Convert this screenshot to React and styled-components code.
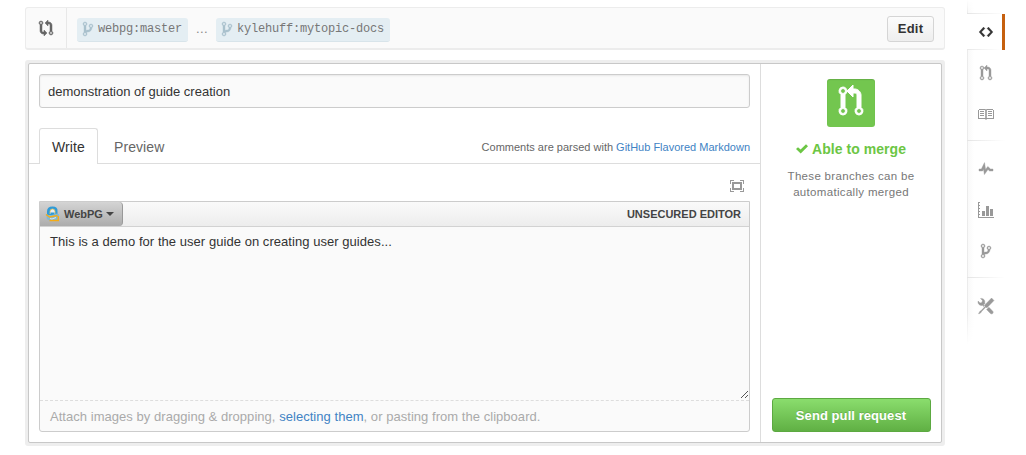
import React from 'react';
import styled, { createGlobalStyle, css } from 'styled-components';

const Global = createGlobalStyle`
  * { box-sizing: border-box; }
  body { margin: 0; background: #fff; color: #333; font: 13px/18px "Liberation Sans", Arial, sans-serif; }
`;

const paths = {
  pull: 'M11 11.28V5c-.03-.78-.34-1.47-.94-2.06C9.46 2.35 8.78 2.03 8 2H7V0L4 3l3 3V4h1c.27.02.48.11.69.31.21.2.3.42.31.69v6.28A1.993 1.993 0 0 0 10 15a1.993 1.993 0 0 0 1-3.72zm-1 2.92c-.66 0-1.2-.55-1.2-1.2 0-.65.55-1.2 1.2-1.2.65 0 1.2.55 1.2 1.2 0 .65-.55 1.2-1.2 1.2zM4 3c0-1.11-.89-2-2-2a1.993 1.993 0 0 0-1 3.72v6.56A1.993 1.993 0 0 0 2 15a1.993 1.993 0 0 0 1-3.72V4.72c.59-.34 1-.98 1-1.72zm-.8 10c0 .66-.55 1.2-1.2 1.2-.65 0-1.2-.55-1.2-1.2 0-.65.55-1.2 1.2-1.2.65 0 1.2.55 1.2 1.2zM2 4.2C1.34 4.2.8 3.65.8 3c0-.65.55-1.2 1.2-1.2.65 0 1.2.55 1.2 1.2 0 .65-.55 1.2-1.2 1.2z',
  compare: 'M5 12H4c-.27-.02-.48-.11-.69-.31-.21-.2-.3-.42-.31-.69V4.72A1.993 1.993 0 0 0 2 1a1.993 1.993 0 0 0-1 3.72V11c.03.78.34 1.47.94 2.06.6.59 1.28.91 2.06.94h1v2l3-3-3-3v2zM2 1.8c.66 0 1.2.55 1.2 1.2 0 .65-.55 1.2-1.2 1.2C1.35 4.2.8 3.65.8 3c0-.65.55-1.2 1.2-1.2zm11 9.48V5c-.03-.78-.34-1.47-.94-2.06-.6-.59-1.28-.91-2.06-.94H9V0L6 3l3 3V4h1c.27.02.48.11.69.31.21.2.3.42.31.69v6.28A1.993 1.993 0 0 0 12 15a1.993 1.993 0 0 0 1-3.72zm-1 2.92c-.66 0-1.2-.55-1.2-1.2 0-.65.55-1.2 1.2-1.2.65 0 1.2.55 1.2 1.2 0 .65-.55 1.2-1.2 1.2z',
  branch: 'M10 5c0-1.11-.89-2-2-2a1.993 1.993 0 0 0-1 3.72v.3c-.02.52-.23.98-.63 1.38-.4.4-.86.61-1.38.63-.83.02-1.48.16-2 .45V4.72a1.993 1.993 0 0 0-1-3.72C.88 1 0 1.89 0 3a2 2 0 0 0 1 1.72v6.56c-.59.35-1 .99-1 1.72 0 1.11.89 2 2 2 1.11 0 2-.89 2-2 0-.53-.2-1-.53-1.36.09-.06.48-.41.59-.47.25-.11.56-.17.94-.17 1.05-.05 1.95-.45 2.75-1.25S8.95 7.77 9 6.73h-.02C9.59 6.37 10 5.73 10 5zM2 1.8a1.2 1.2 0 0 1 0 2.4 1.2 1.2 0 0 1 0-2.4zm0 12.4a1.2 1.2 0 0 1 0-2.4 1.2 1.2 0 0 1 0 2.4zm6-8a1.2 1.2 0 0 1 0-2.4 1.2 1.2 0 0 1 0 2.4z',
  code: 'M9.5 3L8 4.5 11.5 8 8 11.5 9.5 13 14 8 9.5 3zm-5 0L0 8l4.5 5L6 11.5 2.5 8 6 4.5 4.5 3z',
  book: 'M1 3h6l1 .5L9 3h6v1h1v9H9l-1 1-1-1H0V4h1zm0 1v8h6.2V4.5L7 4zm8 0l-.2.5V12H15V4zM2 5h4v1H2zm0 2h4v1H2zm0 2h4v1H2zm8-4h4v1h-4zm0 2h4v1h-4zm0 2h4v1h-4z',
  pulse: 'M11.5 8L8.8 5.4 6.6 8.5 5.5 1.6 2.38 8H0v2h3.6l.9-1.8.9 5.4L9 8.5l1.6 1.5H14V8z',
  graph: 'M0 0h2v1H1v2h1v1H1v2h1v1H1v2h1v1H1v2h1v1H1v2h15v1H0zM4 9h3v5H4zm4-5h3v10H8zm4 3h3v7h-3z',
  tools: 'M4.48 7.27c.26.26 1.28 1.33 1.28 1.33l.56-.58-.88-.91 1.69-1.8s-.76-.74-.43-.45c.32-1.19.03-2.51-.87-3.44C4.93.5 3.66.2 2.52.51l1.93 2-.51 1.96-1.89.52-1.93-1.99C-.19 4.17.1 5.48 1 6.4c.94.98 2.29 1.26 3.48.87zm6.44 1.94l-2.33 2.3 3.84 3.98c.31.33.73.49 1.14.49.41 0 .82-.16 1.14-.49.63-.65.63-1.7 0-2.35l-3.79-3.93zM16 2.53L13.55 0 6.33 7.46l.88.91-4.31 4.46-.99.53-1.39 2.27.35.37 2.2-1.44.51-1.02L7.9 9.08l.88.91L16 2.53z',
  screen: 'M0 0h4v1H1v3H0zm10 0h4v4h-1V1h-3zM0 8h1v3h3v1H0zm13 0h1v4h-4v-1h3zM2 2h10v8H2zm2 2v4h6V4z',
  check: 'M12 2.2L4.7 9.5 0 5.1 2 3.2l2.6 2.4L10 .2z',
};

const Icon = ({ name, w, h, box, weight = 0 }) => (
  <svg
    width={w}
    height={h}
    viewBox={box || `0 0 ${w} ${h}`}
    fill="currentColor"
    fillRule="evenodd"
    stroke="currentColor"
    strokeWidth={weight}
    overflow="visible"
    aria-hidden="true"
  >
    <path d={paths[name]} />
  </svg>
);

const Page = styled.div`
  display: flex;
  width: 1026px;
  height: 455px;
  overflow: hidden;
`;
const Main = styled.main`
  width: 920px;
  margin: 7px 22px 0 25px;
`;
const CompareBar = styled.header`
  display: flex;
  align-items: center;
  height: 43px;
  padding-right: 10px;
  background: #fafafa;
  border: 1px solid #ececec;
  border-bottom-width: 2px;
  border-radius: 3px;
`;
const CompareIcon = styled.div`
  display: flex;
  align-items: center;
  align-self: stretch;
  width: 41px;
  padding: 0 0 1px 12px;
  margin-right: 10px;
  color: #666;
  border-right: 1px solid #e8e8e8;
`;
const Ref = styled.span`
  display: flex;
  align-items: center;
  gap: 5px;
  height: 24px;
  padding: 0 6px 1px;
  margin-top: 4px;
  color: #777;
  background: #e4eef3;
  border-bottom: 1px solid #d8e4ea;
  border-radius: 3px;
  font: 12px/20px "Liberation Mono", monospace;
  letter-spacing: -0.2px;
  svg { color: #a9c1cd; margin-top: -1px; }
`;
const Dots = styled.span`
  width: 28px;
  padding-top: 2px;
  color: #888;
  letter-spacing: 0.4px;
  text-align: center;
`;
const EditButton = styled.button`
  width: 47px;
  height: 26px;
  margin: 1px 0 0 auto;
  padding: 0;
  color: #333;
  background: linear-gradient(#fcfcfc, #eee);
  border: 1px solid #d5d5d5;
  border-radius: 3px;
  font: bold 13px/24px "Liberation Sans", Arial, sans-serif;
  letter-spacing: 0.2px;
`;
const Frame = styled.section`
  margin-top: 10px;
  padding: 3px;
  background: #eee;
  border-radius: 3px;
`;
const Panel = styled.div`
  display: flex;
  height: 380px;
  background: #fff;
  border: 1px solid #c8c8c8;
  border-radius: 2px;
`;
const Form = styled.div`
  display: flex;
  flex-direction: column;
  width: 732px;
  border-right: 1px solid #ddd;
`;
const TitleBox = styled.div`
  height: 34px;
  margin: 10px 10px 20px;
  padding: 0 8px;
  line-height: 33px;
  background: #fafafa;
  border: 1px solid #ccc;
  border-radius: 3px;
  box-shadow: inset 0 1px 2px rgba(0, 0, 0, 0.075);
`;
const Tabs = styled.nav`
  display: flex;
  height: 36px;
  padding: 0 10px;
  border-bottom: 1px solid #ddd;
`;
const Tab = styled.span`
  height: 36px;
  padding: 0 15px;
  color: #666;
  font-size: 14px;
  line-height: 38px;
  letter-spacing: 0.08px;
  ${p => p.$active && css`
    padding: 0 12px;
    width: 59px;
    margin-right: 1px;
    color: #333;
    line-height: 36px;
    background: #fff;
    border: 1px solid #ddd;
    border-bottom: 0;
    border-radius: 3px 3px 0 0;
  `}
`;
const Hint = styled.span`
  margin-left: auto;
  color: #666;
  font-size: 11px;
  line-height: 38px;
`;
const Link = styled.a`
  color: #4183c4;
`;
const ScreenTool = styled.div`
  display: flex;
  justify-content: flex-end;
  align-items: flex-start;
  height: 37px;
  padding: 16px 16px 0;
  color: #999;
`;
const Editor = styled.div`
  display: flex;
  flex-direction: column;
  width: 711px;
  height: 231px;
  margin-left: 10px;
  background: #fafafa;
  border: 1px solid #ccc;
  border-radius: 0 0 3px 3px;
`;
const Toolbar = styled.div`
  display: flex;
  justify-content: space-between;
  height: 25px;
  padding-right: 8px;
  color: #444;
  background: linear-gradient(#fafafa, #ededed);
  border-bottom: 1px solid #d2d2d2;
  font-size: 11px;
  font-weight: bold;
  line-height: 24px;
`;
const WebPG = styled.div`
  display: flex;
  align-items: center;
  width: 83px;
  height: 24px;
  padding-left: 5px;
  background: linear-gradient(#d4d4d4, #acacac);
  border-right: 1px solid #999;
  border-radius: 0 4px 4px 0;
  span { margin: 0 3px 0 4px; }
`;
const Text = styled.div`
  display: flex;
  flex: 1;
  padding: 0 0 1px 10px;
  line-height: 29px;
  letter-spacing: 0.05px;
  border-bottom: 1px dashed #ddd;
  svg { margin: auto 0 0 auto; }
`;
const Attach = styled.div`
  height: 30px;
  padding-left: 10px;
  color: #aaa;
  line-height: 32px;
  letter-spacing: 0.04px;
`;
const MergeColumn = styled.aside`
  display: flex;
  flex: 1;
  flex-direction: column;
  align-items: center;
  padding: 15px 10px 10px;
`;
const MergeBadge = styled.div`
  display: flex;
  justify-content: center;
  width: 48px;
  height: 48px;
  padding-top: 6px;
  color: #fff;
  background: #73c64f;
  border-radius: 3px;
  box-shadow: inset 0 1px 1px rgba(0, 0, 0, 0.12);
`;
const MergeTitle = styled.h3`
  display: flex;
  align-items: center;
  gap: 4px;
  margin: 12px 0 9px;
  color: #6cc644;
  font-size: 14px;
  line-height: 20px;
  letter-spacing: 0.05px;
`;
const MergeText = styled.p`
  margin: 0;
  color: #777;
  font-size: 11.5px;
  line-height: 16px;
  letter-spacing: 0.32px;
  text-align: center;
`;
const SendButton = styled.button`
  width: 159px;
  height: 34px;
  margin-top: auto;
  padding: 1px 0 0;
  color: #fff;
  background: linear-gradient(#8add6d, #60b044);
  border: 1px solid #5ca941;
  border-radius: 3px;
  font: bold 13px/32px "Liberation Sans", Arial, sans-serif;
  letter-spacing: 0.07px;
  text-shadow: 0 -1px 0 rgba(0, 0, 0, 0.15);
`;
const SideNav = styled.nav`
  display: flex;
  flex-direction: column;
  width: 38px;
  height: 345px;
`;
const SideGroup = styled.div`
  height: ${p => p.$h}px;
  padding-top: ${p => p.$top || 0}px;
  background: linear-gradient(90deg, #e9e9e9 0, #eee 1px, #f9f9f9 1px, #fff 7px);
  border-bottom: 1px solid;
  border-image: linear-gradient(90deg, #e4e4e4, #fff) 0 0 1 0;
  ${p => p.$fade && css`
    mask-image: linear-gradient(transparent, #000);
  `}
  ${p => p.$last && css`
    border: 0;
    mask-image: linear-gradient(#000 50%, transparent);
  `}
`;
const SideItem = styled.div`
  display: flex;
  align-items: center;
  justify-content: center;
  height: ${p => p.$h || 41}px;
  color: #999;
`;
const ActiveItem = styled(SideItem)`
  height: 36px;
  padding-left: 3px;
  color: #333;
  background: linear-gradient(90deg, #e8e8e8, #fff 34px) bottom / 35px 1px no-repeat #fff;
  border-right: 3px solid #c6600f;
`;

export default function App() {
  return (
    <>
      <Global />
      <Page>
        <Main>
          <CompareBar>
            <CompareIcon><Icon name="compare" w={16} h={16} box="-1 0 16 16" weight={0.5} /></CompareIcon>
            <Ref><Icon name="branch" w={10} h={14} box="0 1 10 14" weight={0.4} />webpg:master</Ref>
            <Dots>...</Dots>
            <Ref><Icon name="branch" w={10} h={14} box="0 1 10 14" weight={0.4} />kylehuff:mytopic-docs</Ref>
            <EditButton>Edit</EditButton>
          </CompareBar>
          <Frame>
            <Panel>
              <Form>
                <TitleBox>demonstration of guide creation</TitleBox>
                <Tabs>
                  <Tab $active>Write</Tab>
                  <Tab>Preview</Tab>
                  <Hint>Comments are parsed with <Link>GitHub Flavored Markdown</Link></Hint>
                </Tabs>
                <ScreenTool><Icon name="screen" w={14} h={12} /></ScreenTool>
                <Editor>
                  <Toolbar>
                    <WebPG>
                      <svg width="15" height="16" viewBox="0 0 15 16" aria-hidden="true">
                        <path d="M2 9V5.5Q2 .5 7.5 .5T12.500 5.500V10" fill="#2f9bd8" />
                        <path d="M5 8V5.500q0-2.500 2.500-2.500T10 5.500V8" fill="#e5eef2" stroke="#f4c04a" strokeWidth="0.800" />
                        <path d="M5.500 6.500h4v1.500h-4z" fill="#2f9bd8" />
                        <path d="M1 8l4 1.500 7-2 2 1V15H5l-3-2z" fill="#7fb9d6" />
                        <path d="M1 8.500l3.500 2.500 8-1.500M4.500 14.500h8.800V10" fill="none" stroke="#f5ac16" strokeWidth="1.500" />
                        <path d="M5 12.500l2 .5 4-1.500" fill="none" stroke="#dbe9f0" strokeWidth="1" />
                      </svg>
                      <span>WebPG</span>
                      <svg width="8" height="5" viewBox="0 0 8 5" aria-hidden="true"><path d="M0 0h8L4 4z" fill="#444" /></svg>
                    </WebPG>
                    <span>UNSECURED EDITOR</span>
                  </Toolbar>
                  <Text>
                    This is a demo for the user guide on creating user guides...
                    <svg width="9" height="9" viewBox="0 0 9 9" aria-hidden="true"><path d="M1 8l7-7M5 8l3-3" stroke="#555" /></svg>
                  </Text>
                  <Attach>Attach images by dragging &amp; dropping, <Link>selecting them</Link>, or pasting from the clipboard.</Attach>
                </Editor>
              </Form>
              <MergeColumn>
                <MergeBadge><Icon name="pull" w={24} h={32} box="0 0 12 16" weight={0.5} /></MergeBadge>
                <MergeTitle><Icon name="check" w={12} h={10} />Able to merge</MergeTitle>
                <MergeText>These branches can be<br />automatically merged</MergeText>
                <SendButton>Send pull request</SendButton>
              </MergeColumn>
            </Panel>
          </Frame>
        </Main>
        <SideNav>
          <SideGroup $h={14} $fade />
          <ActiveItem><Icon name="code" w={14} h={14} box="0 1 14 14" weight={0.2} /></ActiveItem>
          <SideGroup $h={91} $top={2}>
            <SideItem><Icon name="pull" w={12} h={16} weight={0.4} /></SideItem>
            <SideItem><Icon name="book" w={16} h={16} /></SideItem>
          </SideGroup>
          <SideGroup $h={137} $top={7}>
            <SideItem><Icon name="pulse" w={14} h={16} weight={0.4} /></SideItem>
            <SideItem><Icon name="graph" w={16} h={16} /></SideItem>
            <SideItem><Icon name="branch" w={10} h={16} weight={0.4} /></SideItem>
          </SideGroup>
          <SideGroup $h={67} $top={7} $last>
            <SideItem><Icon name="tools" w={16} h={16} weight={0.4} /></SideItem>
          </SideGroup>
        </SideNav>
      </Page>
    </>
  );
}
